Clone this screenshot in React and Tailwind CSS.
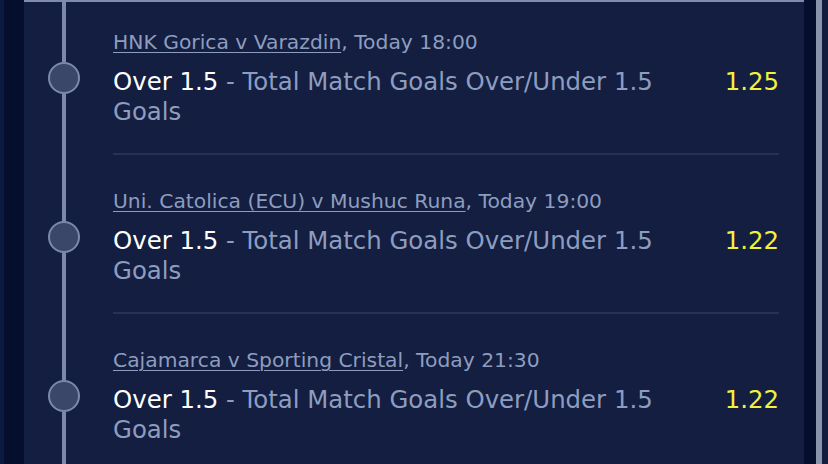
import React from "react";

const bets = [
  { match: "HNK Gorica v Varazdin", time: "Today 18:00", pick: "Over 1.5", market: "Total Match Goals Over/Under 1.5 Goals", odds: "1.25" },
  { match: "Uni. Catolica (ECU) v Mushuc Runa", time: "Today 19:00", pick: "Over 1.5", market: "Total Match Goals Over/Under 1.5 Goals", odds: "1.22" },
  { match: "Cajamarca v Sporting Cristal", time: "Today 21:30", pick: "Over 1.5", market: "Total Match Goals Over/Under 1.5 Goals", odds: "1.22" },
];

function BetRow({ bet, first }) {
  return (
    <li className="flex">
      {/* timeline */}
      <div className="w-[80px] flex flex-col items-center shrink-0">
        <div className={`w-[4px] bg-[#7b89ad] ${first ? "h-[60px]" : "h-[66px]"}`} />
        <div className="w-[32px] h-[32px] rounded-full bg-[#3b4768] border-2 border-[#7b89ad] shrink-0" />
        <div className="w-[4px] flex-1 bg-[#7b89ad]" />
      </div>

      <div className={`flex-1 ml-[9px] mr-[25px] pb-[26px] border-b-2 border-[#263253] ${first ? "pt-[27px]" : "pt-[33px]"}`}>
        <p className="text-[20.3px] leading-[26px] text-[#8e9dbf]">
          <span className="underline underline-offset-[3px] decoration-1">{bet.match}</span>, {bet.time}
        </p>
        <div className="flex items-start mt-[12px]">
          <p className="flex-1 pr-[16px] text-[24.4px] leading-[30px] text-[#8e9dbf]">
            <span className="text-white">{bet.pick}</span> - {bet.market}
          </p>
          <span className="w-[80px] text-right text-[24.4px] leading-[30px] text-[#f2f23c]">{bet.odds}</span>
        </div>
      </div>
    </li>
  );
}

export default function App() {
  return (
    <div className="w-[828px] h-[464px] overflow-hidden flex bg-[#050e2c]" style={{ fontFamily: '"DejaVu Sans", Verdana, sans-serif' }}>
      <div className="w-[4px] bg-[#0c1940] shrink-0" />
      <div className="w-[20px] shrink-0" />
      <div className="w-[780px] shrink-0 bg-[#131e41] border-t-2 border-[#7e8cae]">
        <ul>
          {bets.map((bet, i) => (
            <BetRow key={i} bet={bet} first={i === 0} />
          ))}
        </ul>
      </div>
      <div className="w-[12px] shrink-0" />
      <div className="w-[6px] bg-[#8a93a9] shrink-0" />
      <div className="flex-1 bg-[#141d3d]" />
    </div>
  );
}
